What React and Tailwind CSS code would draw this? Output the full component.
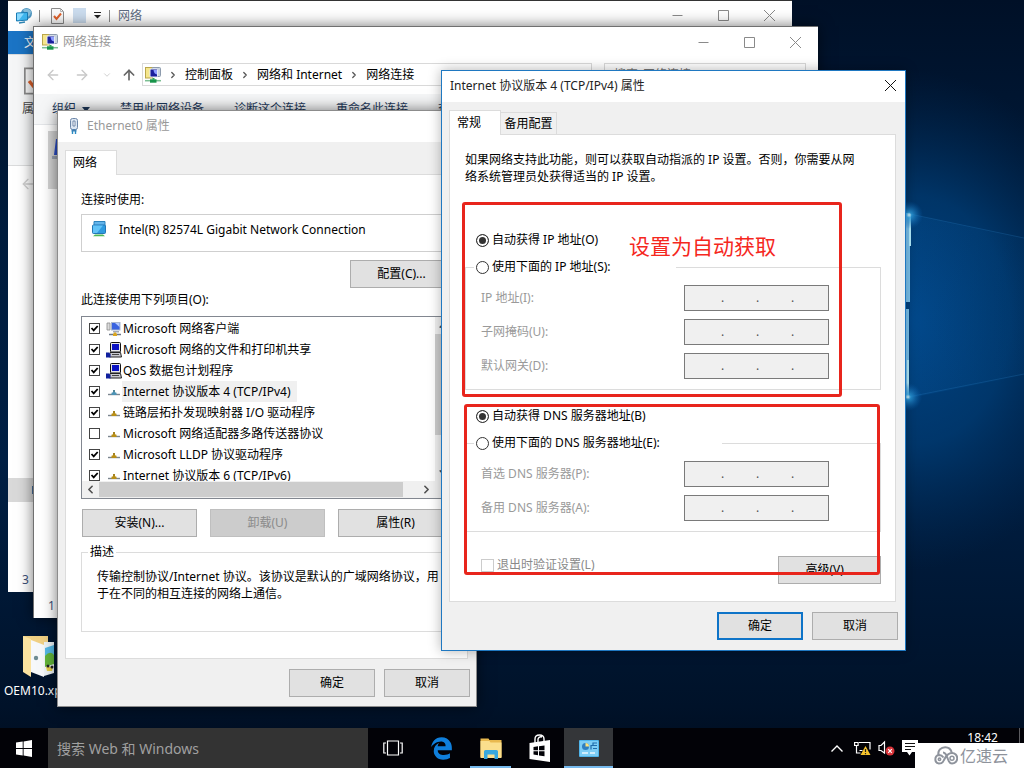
import { useState } from "react";
import { FaEdgeLegacy } from "react-icons/fa6";
import {
  ArrowLeft,
  ArrowRight,
  ArrowUp,
  ChevronDown,
  ChevronLeft,
  ChevronRight,
  ChevronUp,
} from "lucide-react";

const items = [
  { name: "Microsoft 网络客户端", icon: "client", on: true },
  { name: "Microsoft 网络的文件和打印机共享", icon: "service", on: true },
  { name: "QoS 数据包计划程序", icon: "service", on: true },
  { name: "Internet 协议版本 4 (TCP/IPv4)", icon: "active", on: true },
  { name: "链路层拓扑发现映射器 I/O 驱动程序", icon: "protocol", on: true },
  { name: "Microsoft 网络适配器多路传送器协议", icon: "protocol", on: false },
  { name: "Microsoft LLDP 协议驱动程序", icon: "protocol", on: true },
  { name: "Internet 协议版本 6 (TCP/IPv6)", icon: "protocol", on: true },
];

function Wallpaper() {
  return (
    <svg
      className="absolute inset-0 h-full w-full"
      viewBox="0 0 1024 768"
      preserveAspectRatio="none"
    >
      <defs>
        <linearGradient id="sky" x1="0" y1="0" x2="0" y2="1">
          <stop offset="0" stopColor="#001027" />
          <stop offset="0.3" stopColor="#001c3d" />
          <stop offset="0.6" stopColor="#001f44" />
          <stop offset="0.92" stopColor="#001229" />
          <stop offset="1" stopColor="#000c1e" />
        </linearGradient>
        <radialGradient id="glow">
          <stop offset="0" stopColor="#00509a" stopOpacity="0.75" />
          <stop offset="0.5" stopColor="#004380" stopOpacity="0.65" />
          <stop offset="1" stopColor="#00305f" stopOpacity="0" />
        </radialGradient>
        <radialGradient id="spark">
          <stop offset="0" stopColor="#d8f6ff" />
          <stop offset="0.2" stopColor="#2fa4e6" stopOpacity="0.8" />
          <stop offset="1" stopColor="#0a5fb0" stopOpacity="0" />
        </radialGradient>
        <linearGradient id="beam" x1="0" y1="0" x2="1" y2="0">
          <stop offset="0" stopColor="#0a62b0" stopOpacity="0.2" />
          <stop offset="1" stopColor="#0a62b0" stopOpacity="0.05" />
        </linearGradient>
      </defs>
      <rect width="1024" height="768" fill="url(#sky)" />
      <ellipse cx="910" cy="320" rx="200" ry="250" fill="url(#glow)" />
      <path d="M910 214 L1024 238 L1024 375 L910 398 Z" fill="url(#beam)" />
      <path d="M910 214 L1024 238" stroke="#2b7fc4" strokeOpacity="0.25" />
      <path d="M908 397 L1024 374" stroke="#2b7fc4" strokeOpacity="0.25" />
      <rect x="890" y="213" width="20" height="89" fill="#7cc4f0" />
      <rect x="890" y="309" width="19" height="89" fill="#7cc4f0" />
      <path d="M910 214 V246" stroke="#b5efff" strokeWidth="2" />
      <path d="M908 360 V398" stroke="#b5efff" strokeWidth="2" />
      <circle cx="909" cy="215" r="14" fill="url(#spark)" />
      <circle cx="908" cy="397" r="14" fill="url(#spark)" />
    </svg>
  );
}

function CaptionButtons() {
  return (
    <div className="flex text-[#8a8a8a]">
      {["M0.5 5.5 H10.5", "M0.5 0.5 H10.5 V10.5 H0.5 Z", "M0 0 L11 11 M11 0 L0 11"].map(
        (d, i) => (
          <button
            key={d}
            aria-label={["最小化", "最大化", "关闭"][i]}
            className="grid h-7 w-[46px] place-items-center"
          >
            <svg width="11" height="11" fill="none" stroke="currentColor">
              <path d={d} />
            </svg>
          </button>
        )
      )}
    </div>
  );
}

function ConnectionsIcon() {
  return (
    <svg width="16" height="16" viewBox="0 0 16 16" className="shrink-0">
      <rect x="0.5" y="0.5" width="7" height="10.5" fill="#f5e68c" stroke="#b9a64c" />
      <rect x="7" y="0.5" width="8.5" height="9" rx="1" fill="#c9d4e0" stroke="#8d9bad" />
      <rect x="5" y="2" width="7.5" height="8" rx="1" fill="#1a1f9c" stroke="#e4eaf4" />
      <path d="M8.5 3 h3.500 v4.500 q-3-.5-3.500-4.500z" fill="#8d9cff" />
      <path d="M7.5 11 h2 v1.500 h-2z" fill="#27ab55" />
      <path d="M0 13.700 h16" stroke="#7bbf92" strokeWidth="1.500" />
      <path d="M5 12.300 h6.500 v3.400 h-6.500z" fill="#18944a" />
    </svg>
  );
}

function CheckDocIcon({ className }) {
  return (
    <svg viewBox="0 0 13 16" className={className}>
      <path d="M0.5 0.5 H9.5 L12.5 3.5 V15.5 H0.5 Z" fill="#fafafa" stroke="#8b8b8b" />
      <path d="M9.5 0.5 V3.5 H12.5" fill="none" stroke="#b5b5b5" />
      <path d="M3 8 L5.5 11 L10 5.5" fill="none" stroke="#e0622c" strokeWidth="2" />
    </svg>
  );
}

function ItemIcon({ type }) {
  if (type === "client") {
    return (
      <svg width="16" height="16" viewBox="0 0 16 16">
        <path d="M1 2 h3 v7 h-3z" fill="#dcdcdc" stroke="#8b8b8b" strokeWidth="0.8" />
        <rect x="5.5" y="1.5" width="8.5" height="7.5" fill="#3a63e0" stroke="#a9b6cf" />
        <path d="M9 2 h4.5 v4z" fill="#b7cbff" />
        <path d="M7 10 h6 v1.5 h-6z" fill="#a3a9b5" />
        <path d="M3 13.5 h12" stroke="#6e7888" strokeWidth="1.5" />
        <path d="M7 15 v-2 l2-2 2 2 v2z" fill="#d9a520" />
      </svg>
    );
  }
  if (type === "service") {
    return (
      <svg width="16" height="16" viewBox="0 0 16 16">
        <rect x="4.5" y="0.5" width="10" height="9.5" rx="1" fill="#e6e6ea" stroke="#111" />
        <rect x="6" y="2" width="7" height="6" fill="#0a12c4" />
        <path d="M4 10.5 h10.5 l1 4.5 h-12z" fill="#c9c9cf" stroke="#222" />
        <path d="M6 12.5 h7" stroke="#444" />
        <path d="M0 10.5 h3 l1.5 2 v3 h-4.5z" fill="#10209e" />
      </svg>
    );
  }
  const color = type === "active" ? "#4d93b5" : "#b98f17";
  return (
    <svg width="16" height="16" viewBox="0 0 16 16">
      <path d="M2 10.5 h12" stroke="#7b858f" strokeWidth="1.4" />
      <path d="M5.5 11 V8.7 L7 8.2 V6 h2 V8.2 L10.5 8.7 V11z" fill={color} />
      <path d="M7.5 6 h1 v2 h-1z" fill="#6d6140" fillOpacity="0.5" />
    </svg>
  );
}

function WinButton({ children, className = "w-[86px]", primary, disabled }) {
  const look = primary
    ? "border-2 border-[#0e74c8] bg-[#e1e1e1]"
    : disabled
      ? "border border-[#bfbfbf] bg-[#cccccc] text-[#8b8b8b]"
      : "border border-[#adadad] bg-[#e1e1e1]";
  return (
    <button disabled={disabled} className={`h-7 shrink-0 ${look} ${className}`}>
      {children}
    </button>
  );
}

function Radio({ name, label, checked, onChange }) {
  return (
    <label className="flex h-[18px] items-center gap-[3px]">
      <input
        type="radio"
        name={name}
        checked={checked}
        onChange={onChange}
        className="h-[13px] w-[13px] appearance-none rounded-full border border-[#333] bg-white checked:bg-[#333] checked:shadow-[inset_0_0_0_2px_white]"
      />
      {label}
    </label>
  );
}

function IpField({ id, label }) {
  return (
    <div className="flex h-[26px] items-center justify-between pr-[51px] pl-[7px]">
      <label htmlFor={id} className="text-[#9a9a9a]">
        {label}
      </label>
      <div className="flex h-full w-[145px] items-center border border-[#7a7a7a] bg-[#f0f0f0] pl-1 text-[#555]">
        {[0, 1, 2, 3].map((n) => (
          <div key={n} className="flex items-center">
            {n > 0 && <span className="w-[3px]">.</span>}
            <input
              id={n === 0 ? id : undefined}
              aria-label={n === 0 ? undefined : `${label} ${n + 1}`}
              disabled
              className="w-8 text-center"
            />
          </div>
        ))}
      </div>
    </div>
  );
}

function ExplorerWindow() {
  return (
    <section className="absolute top-0 left-2 flex h-[592px] w-[784px] flex-col border-t border-[#333] bg-white text-[#5d6a80]">
      <header className="flex h-[30px] items-center pb-px">
        <svg width="16" height="16" viewBox="0 0 16 16" className="ml-2">
          <circle cx="10.500" cy="5.500" r="5.500" fill="#4a93bf" />
          <path d="M7 2 q4-3 8 1 q0 5-4 6z" fill="#86bcd8" />
          <path d="M0.500 5 L11.500 4.500 V12 L0.500 13z" fill="#3fb6ee" stroke="#1b7bb3" />
          <path d="M1 5.500 h7 l-5 6.500 h-2z" fill="#8adaff" />
          <path d="M3 15 l6-1" stroke="#2f86b5" strokeWidth="1.500" />
        </svg>
        <span className="mx-[7px] h-3 w-px bg-[#8a8a8a]" />
        <CheckDocIcon className="ml-1 h-4 w-[13px]" />
        <span className="ml-[9px] h-[15px] w-[13px] bg-[#cbdcee]" />
        <svg width="7" height="7" viewBox="0 0 7 7" className="ml-2">
          <path d="M0 0.5 h7" stroke="#222" />
          <path d="M0 3 h7 l-3.5 3.5z" fill="#222" />
        </svg>
        <span className="mx-2 h-3 w-px bg-[#8a8a8a]" />
        <span className="flex-1">网络</span>
        <CaptionButtons />
      </header>
      <nav className="flex h-[23px] items-center">
        <button className="h-full w-14 bg-[#1b74c5] text-white">文件</button>
      </nav>
      <div className="flex h-[112px] flex-col items-start border-y border-[#dadbdc] bg-[#f5f6f7] pt-3 pl-[14px] text-[#444]">
        <CheckDocIcon className="ml-[2px] h-7 w-[22px]" />
        <span className="mt-[5px]">属性</span>
      </div>
      <div className="flex flex-1 flex-col pt-[10px]">
        <ArrowLeft size={16} strokeWidth={2} className="ml-3 text-[#d0d0d0]" />
        <div className="mt-[286px] flex h-6 items-center bg-[#d9d9d9] pl-6">
          <span className="h-2 w-4 bg-[#4a6f9c]" />
        </div>
      </div>
      <footer className="flex h-6 items-center pl-[14px] text-[#3b4f78]">3</footer>
    </section>
  );
}

function ConnectionsWindow() {
  return (
    <section className="absolute top-[26px] left-[33px] flex h-[592px] w-[785px] flex-col border-t border-l border-[#707070] bg-white shadow-[0_0_14px_rgba(0,0,0,0.55)]">
      <header className="flex h-[30px] items-center gap-[5px] pl-2 text-[#999]">
        <ConnectionsIcon />
        <h2 className="flex-1">网络连接</h2>
        <CaptionButtons />
      </header>
      <div className="mt-[6px] flex h-[23px] items-center pr-3 text-[#c8c8c8]">
        <ArrowLeft size={16} strokeWidth={2} className="ml-[11px]" />
        <ArrowRight size={16} strokeWidth={2} className="ml-[13px]" />
        <ChevronDown size={10} strokeWidth={2} className="ml-[12px]" />
        <ArrowUp size={16} strokeWidth={2.5} className="ml-[9px] text-[#666]" />
        <div className="ml-[5px] flex h-full flex-1 items-center border border-[#d9d9d9] pl-[2px] text-black">
          <ConnectionsIcon />
          {["控制面板", "网络和 Internet", "网络连接"].map((crumb) => (
            <span key={crumb} className="flex items-center">
              <ChevronRight size={10} strokeWidth={3} className="mx-[7px] text-[#555]" />
              {crumb}
            </span>
          ))}
          <span className="flex-1" />
          <ChevronDown size={12} className="mr-6 text-[#777]" />
        </div>
        <input
          aria-label="搜索"
          placeholder='搜索"网络连接"'
          className="ml-3 h-full w-[202px] border border-[#d9d9d9] pl-[9px] placeholder:text-[#777]"
        />
      </div>
      <div className="mt-2 flex h-[31px] shrink-0 items-center border-b border-[#e3e5e8] bg-[#f5f6f7] pl-[18px] whitespace-nowrap text-[#1e395b]">
        <span className="flex w-[68px] items-center gap-[6px]">
          组织
          <svg width="8" height="5">
            <path d="M0 0 h8 l-4 5z" fill="#1e395b" />
          </svg>
        </span>
        <span className="w-[114px]">禁用此网络设备</span>
        <span className="w-[102px]">诊断这个连接</span>
        <span className="w-[102px]">重命名此连接</span>
        <span>查</span>
      </div>
      <div className="flex-1 pt-[6px] pl-[14px]">
        <div className="h-[58px] w-60 bg-[#d4d4d4] pt-2 pl-1">
          <svg width="22" height="22">
            <path d="M4 0 h18 v16 h-20z" fill="#2b4ec9" />
            <path d="M0 17 h22 v3 h-22z" fill="#9aa3b3" />
          </svg>
        </div>
      </div>
      <footer className="flex h-6 items-center pl-[14px] text-[#3b4f78]">1</footer>
    </section>
  );
}

function ScrollArrow({ icon: Icon, label }) {
  return (
    <button aria-label={label} className="grid h-[17px] w-[17px] place-items-center bg-[#f0f0f0]">
      <Icon size={13} strokeWidth={3} className="text-[#505050]" />
    </button>
  );
}

function EthernetDialog() {
  return (
    <section className="absolute top-[110px] left-[57px] w-[420px] border border-[#8c8c8c] bg-[#f0f0f0] shadow-[0_0_14px_rgba(0,0,0,0.55)]">
      <header className="flex h-[31px] items-center gap-2 bg-white pb-px pl-[11px] text-[#999]">
        <svg width="10" height="16" viewBox="0 0 10 16">
          <rect x="1.5" y="0.5" width="7" height="11" rx="2" fill="#dce6f2" stroke="#6d86a8" />
          <path d="M4 3 h2 v5 h-2z" fill="#fff" stroke="#5b7599" strokeWidth="0.8" />
          <path d="M2.5 11.5 h5 v2 h-5z" fill="#3f7fb4" />
          <path d="M3.5 13 v3 M6.5 13 v3" stroke="#2a8ac2" strokeWidth="1.4" />
        </svg>
        <h2>Ethernet0 属性</h2>
      </header>
      <div className="pt-2 pr-2 pl-[7px]">
        <div className="flex h-6">
          <button className="relative z-10 -mb-px w-[52px] border border-b-0 border-[#dcdcdc] bg-white pr-3">
            网络
          </button>
        </div>
        <div className="border border-[#dcdcdc] bg-white pt-4 pr-[14px] pb-[26px] pl-[15px]">
          <p className="h-[18px]">连接时使用:</p>
          <div className="mt-[5px] flex h-[38px] gap-3 border border-[#cfcfcf] pt-[6px] pl-[9px]">
            <svg width="16" height="16" viewBox="0 0 16 16">
              <path d="M3 0.5 h11 v4 h-11z" fill="#63b4ea" stroke="#2d83bd" />
              <rect x="1.5" y="4" width="13" height="8.500" rx="1" fill="#2e9be0" stroke="#2477b5" />
              <path d="M2 4.500 h10 l-6 7.5 h-4z" fill="#62c3f7" />
              <path d="M4 13.500 h8 l2 1.800 h-12z" fill="#4fb857" />
            </svg>
            <span>Intel(R) 82574L Gigabit Network Connection</span>
          </div>
          <div className="mt-2 flex justify-end">
            <WinButton className="w-[103px]">配置(C)...</WinButton>
          </div>
          <p className="mt-[3px] h-[18px]">此连接使用下列项目(O):</p>
          <div className="mt-[7px] flex h-[183px] flex-col border border-[#828790]">
            <div className="flex min-h-0 flex-1">
              <div className="flex-1 overflow-hidden pt-px">
                {items.map((item) => (
                  <label key={item.name} className="flex h-[21px] items-center pl-[7px]">
                    <span className="grid">
                      <input
                        type="checkbox"
                        defaultChecked={item.on}
                        className="peer h-[11px] w-[11px] appearance-none border border-[#444] bg-white [grid-area:1/1]"
                      />
                      <svg
                        viewBox="0 0 11 11"
                        className="pointer-events-none invisible h-[11px] w-[11px] [grid-area:1/1] peer-checked:visible"
                      >
                        <path d="M2.5 5 L4.7 7.4 L8.7 3" fill="none" stroke="#000" strokeWidth="1.8" />
                      </svg>
                    </span>
                    <span className="ml-[6px] shrink-0">
                      <ItemIcon type={item.icon} />
                    </span>
                    <span
                      className={
                        item.icon === "active"
                          ? "flex h-full items-center bg-[#f0f0f0] pr-[6px] pl-px whitespace-nowrap"
                          : "pl-px whitespace-nowrap"
                      }
                    >
                      {item.name}
                    </span>
                  </label>
                ))}
              </div>
              <div className="flex w-[17px] flex-col bg-[#f0f0f0]">
                <ScrollArrow icon={ChevronUp} label="向上滚动" />
                <div className="h-[101px] bg-[#cdcdcd]" />
                <div className="flex-1" />
                <ScrollArrow icon={ChevronDown} label="向下滚动" />
              </div>
            </div>
            <div className="flex h-[17px] bg-[#f0f0f0] pr-[17px]">
              <ScrollArrow icon={ChevronLeft} label="向左滚动" />
              <div className="my-px w-[304px] bg-[#cdcdcd]" />
              <div className="flex-1" />
              <ScrollArrow icon={ChevronRight} label="向右滚动" />
            </div>
          </div>
          <div className="mt-[10px] flex justify-between pl-px">
            <WinButton className="w-[115px]">安装(N)...</WinButton>
            <WinButton className="w-[115px]" disabled>
              卸载(U)
            </WinButton>
            <WinButton className="w-[115px]">属性(R)</WinButton>
          </div>
          <fieldset className="mt-[6px] border border-[#dcdcdc] pr-2 pb-[29px] pl-[6px]">
            <legend className="h-[18px] px-[2px]">描述</legend>
            <p className="pt-[7px] pl-[9px] leading-[17px]">
              传输控制协议/Internet 协议。该协议是默认的广域网络协议，用于在不同的相互连接的网络上通信。
            </p>
          </fieldset>
        </div>
      </div>
      <footer className="flex justify-end gap-[9px] pt-[10px] pr-[6px] pb-[9px]">
        <WinButton>确定</WinButton>
        <WinButton>取消</WinButton>
      </footer>
    </section>
  );
}

function Ipv4Dialog() {
  const [ipMode, setIpMode] = useState("auto");
  const [dnsMode, setDnsMode] = useState("auto");

  return (
    <section className="absolute top-[70px] left-[441px] w-[465px] border border-[#1f78c1] bg-[#f0f0f0] shadow-[0_0_12px_rgba(0,0,0,0.3)]">
      <header className="flex h-[31px] items-center justify-between bg-white pr-[9px] pb-[2px] pl-2 text-[#222]">
        <h2>Internet 协议版本 4 (TCP/IPv4) 属性</h2>
        <button aria-label="关闭">
          <svg width="11" height="11" stroke="#111">
            <path d="M0 0 L11 11 M11 0 L0 11" />
          </svg>
        </button>
      </header>

      <div className="pt-2 pr-[9px] pl-[7px]">
        <div className="flex h-6 items-end">
          <button className="relative z-10 -mb-px h-[25px] w-[52px] border border-b-0 border-[#dcdcdc] bg-white pr-3">
            常规
          </button>
          <button className="h-[22px] w-14 border border-b-0 border-l-0 border-[#dcdcdc]">
            备用配置
          </button>
        </div>
        <div className="border border-[#dcdcdc] bg-white pt-4 pr-[14px] pb-[17px] pl-[15px]">
          <p className="max-w-[400px] leading-[17px]">
            如果网络支持此功能，则可以获取自动指派的 IP 设置。否则，你需要从网络系统管理员处获得适当的 IP 设置。
          </p>

          {/* IP address */}
          <div className="mt-[46px] pl-[11px]">
            <Radio
              name="ip"
              label="自动获得 IP 地址(O)"
              checked={ipMode === "auto"}
              onChange={() => setIpMode("auto")}
            />
          </div>
          <fieldset className="mt-[9px] border border-[#dcdcdc] pb-[10px] pl-2">
            <legend className="w-[202px] pl-[2px]">
              <Radio
                name="ip"
                label="使用下面的 IP 地址(S):"
                checked={ipMode === "manual"}
                onChange={() => setIpMode("manual")}
              />
            </legend>
            <div className="flex flex-col gap-2 pt-[9px]">
              <IpField id="ip-address" label="IP 地址(I):" />
              <IpField id="subnet-mask" label="子网掩码(U):" />
              <IpField id="gateway" label="默认网关(D):" />
            </div>
          </fieldset>

          {/* DNS */}
          <div className="mt-[17px] pl-[11px]">
            <Radio
              name="dns"
              label="自动获得 DNS 服务器地址(B)"
              checked={dnsMode === "auto"}
              onChange={() => setDnsMode("auto")}
            />
          </div>
          <fieldset className="mt-[9px] border border-[#dcdcdc] pb-[10px] pl-2">
            <legend className="w-[248px] pl-[2px]">
              <Radio
                name="dns"
                label="使用下面的 DNS 服务器地址(E):"
                checked={dnsMode === "manual"}
                onChange={() => setDnsMode("manual")}
              />
            </legend>
            <div className="flex flex-col gap-2 pt-[9px]">
              <IpField id="dns-primary" label="首选 DNS 服务器(P):" />
              <IpField id="dns-backup" label="备用 DNS 服务器(A):" />
            </div>
          </fieldset>

          <div className="mt-6 flex items-start justify-between pl-4">
            <label className="flex h-[18px] items-center gap-[3px] text-[#8a8a8a]">
              <input
                type="checkbox"
                disabled
                className="h-[13px] w-[13px] appearance-none border border-[#cccccc] bg-white"
              />
              退出时验证设置(L)
            </label>
            <WinButton className="w-[103px]">高级(V)...</WinButton>
          </div>
        </div>
      </div>

      <footer className="flex justify-end gap-[9px] pt-[10px] pr-[7px] pb-[10px]">
        <WinButton primary>确定</WinButton>
        <WinButton>取消</WinButton>
      </footer>

      {/* Tutorial marks over the dialog */}
      <div className="pointer-events-none absolute top-[131px] left-5 z-20 h-[195px] w-[380px] rounded-[3px] border-3 border-[#e8251c]" />
      <div className="pointer-events-none absolute top-[333px] left-[22px] z-20 h-[171px] w-[416px] rounded-[3px] border-3 border-[#e8251c]" />
      <p className="pointer-events-none absolute top-[163px] left-[187px] z-20 text-[21px] leading-6 text-[#f5281e]">
        设置为自动获取
      </p>
    </section>
  );
}

function DesktopIcon() {
  return (
    <a href="#oem" className="absolute top-[634px] left-1 text-white">
      <svg width="34" height="46" viewBox="0 0 34 46" className="ml-[18px]">
        <path d="M1 2 h25 v36 h-17z" fill="#f0d084" />
        <path d="M1 2 l8 3 v38 l-8-5z" fill="#fbe3a0" />
        <path d="M9 6 l13 5 v32 l-13-5z" fill="#f6f8fa" />
        <path d="M22 8 h10 v31 l-10 3z" fill="#eef4f7" />
        <path d="M23 14 l9-3 v12 l-9 4z" fill="#55b9e6" />
        <path d="M23 22 q5-6 9-1 v9 l-9 3z" fill="#63b53a" />
        <path d="M24 33 h7 l-1 4 h-5z" fill="#e8d04c" />
        <circle cx="26" cy="32" r="1.500" fill="#222" />
        <circle cx="30" cy="33" r="1.500" fill="#222" />
        <circle cx="14" cy="24" r="2.2" fill="#6e8c93" />
      </svg>
      <span className="mt-[2px] block">OEM10.xp</span>
    </a>
  );
}

function Taskbar() {
  return (
    <footer className="absolute inset-x-0 bottom-0 flex h-10 bg-[#020207] text-white">
      <button aria-label="开始" className="grid w-12 place-items-center">
        <svg width="16" height="17" viewBox="0 0 16 17" fill="#fff">
          <path d="M0 2.5 L6.7 1.5 V8 H0z M7.6 1.4 L16 0 V8 H7.6z M0 9 H6.7 V15.5 L0 14.5z M7.6 9 H16 V17 L7.6 15.6z" />
        </svg>
      </button>
      <input
        aria-label="搜索"
        placeholder="搜索 Web 和 Windows"
        className="h-full w-80 bg-[#333333] px-[9px] text-[14px] placeholder:text-[#a0a0a0]"
      />
      <button aria-label="任务视图" className="grid w-[49px] place-items-center">
        <svg width="20" height="16" viewBox="0 0 20 16" fill="none" stroke="#fff" strokeWidth="1.2">
          <path d="M4.5 1 H15.5 V15 H4.5z M3 3 H0.8 V13 H3 M17 3 H19.2 V13 H17" />
        </svg>
      </button>
      <button aria-label="Edge" className="grid w-[49px] place-items-center">
        <FaEdgeLegacy size={23} className="text-[#0f7fdc]" />
      </button>
      <button aria-label="文件资源管理器" className="relative grid w-[49px] place-items-center">
        <svg width="22" height="21" viewBox="0 0 22 21">
          <path d="M0.5 0.500 h8 l1 1.500 h12 v17 h-21z" fill="#e9b94f" />
          <path d="M0.5 3 h9 l1 1.500 h11 v15.500 h-21z" fill="#fbdf8d" />
          <path d="M4 21 V13.500 q0-1.500 1.500-1.500 h11 q1.5 0 1.5 1.5 V21 h-3.5 v-4.500 h-7 v4.500z" fill="#37a8de" />
        </svg>
        <span className="absolute inset-x-1 bottom-0 h-[2px] bg-[#76b9ed]" />
      </button>
      <button aria-label="应用商店" className="grid w-[49px] place-items-center">
        <svg width="22" height="28" viewBox="0 0 22 28">
          <path d="M6 9 V5 q0-4 4.500-4 q4.500 0 4.500 4 V8 M9 8 V5 q1-3 4-2" fill="none" stroke="#fff" strokeWidth="1.4" />
          <path d="M0.5 9 L21 6 V28 L0.5 25z" fill="#fff" />
          <path d="M4.5 13 l4.5-.7 v4 h-4.5z M10 12.2 l5.5-.8 v4.9 h-5.5z M4.5 17.3 h4.500 v4 l-4.500-.7z M10 17.3 h5.500 v5 l-5.500-.8z" fill="#020207" />
        </svg>
      </button>
      <button aria-label="控制面板" className="relative grid w-[49px] place-items-center bg-[#343639]">
        <svg width="20" height="17" viewBox="0 0 20 17">
          <rect width="20" height="17" rx="1" fill="#4fb4ea" />
          <rect x="1" y="1" width="18" height="15" fill="#7dcdf5" />
          <circle cx="6.500" cy="6.500" r="3.500" fill="#2f7fc0" />
          <path d="M6.500 6.500 V3 A3.500 3.500 0 0 1 10 6.500z" fill="#ffe27a" />
          <path d="M12 9.500 v-4 h2 v-2.500 h4 M14 5.500 h4 M14 8.500 h4" fill="none" stroke="#1f6cab" strokeWidth="1.200" />
          <path d="M3 13 h6 M11 13 h5" stroke="#e9f8ff" strokeWidth="1.500" />
        </svg>
        <span className="absolute inset-x-0 bottom-0 h-[2px] bg-[#76b9ed]" />
      </button>

      {/* Tray */}
      <div className="ml-auto flex items-center">
        <svg width="12" height="7" fill="none" stroke="#fff" strokeWidth="1.4">
          <path d="M0.500 6.500 L6 1 L11.500 6.500" />
        </svg>
        <svg width="17" height="16" viewBox="0 0 17 16" className="ml-[11px]">
          <path d="M5 2.500 h11 v7 M0.600 2.500 h3.500 v3 h-3.500z M2.500 5.500 v7.500 h4 M5.500 10.500 h3" fill="none" stroke="#fff" strokeWidth="1.200" />
          <path d="M11.500 6 L16.500 15 H6.500z" fill="#f6c32c" />
          <path d="M11.500 9 v3 M11.500 13 v1.200" stroke="#222" strokeWidth="1.200" />
        </svg>
        <svg width="17" height="16" viewBox="0 0 17 16" className="ml-[7px]">
          <path d="M1 5.500 h2 L6.500 2 v11 L3 10.500 H1z" fill="none" stroke="#fff" strokeWidth="1.200" />
          <circle cx="12" cy="11" r="4.500" fill="#d8343a" />
          <path d="M10.200 9.200 l3.600 3.600 M13.800 9.200 l-3.600 3.600" stroke="#fff" strokeWidth="1.200" />
        </svg>
        <svg width="16" height="16" viewBox="0 0 16 16" className="ml-[7px]">
          <path d="M0 0 h16 v12 h-6 l-2.500 3.500 -2.500-3.500 h-5z" fill="#fff" />
          <path d="M3 3.500 h10 M3 6.500 h10 M3 9.500 h6" stroke="#111" />
        </svg>
        <time className="ml-[49px] self-start pt-1 leading-3">18:42</time>
        <span className="mr-1 ml-[21px] h-full w-px bg-[#5c5c60]" />
      </div>
    </footer>
  );
}

function Watermark() {
  return (
    <div className="absolute right-0 bottom-0 flex h-[25px] w-[109px] items-center gap-[2px] bg-white pl-[18px] text-base leading-4 text-[#8e939c]">
      <svg width="25" height="19" viewBox="0 0 25 19" fill="none" stroke="#8e939c" strokeWidth="2">
        <path d="M5.500 9 C4.500 4.500 8 1.200 12.200 1.200 C15.500 1.200 18 3.200 18.800 6.800" />
        <path d="M10 6.500 C12.500 6.500 13.500 9 14.500 12 C15.500 15.500 16.500 17.500 19 17.500 A5.200 5.200 0 0 0 19 7 C14 7 12.500 11 11 14 C10 16.500 8.500 17.500 6 17.500 A4.300 4.300 0 0 1 6 9 C8 9 9.500 10 10.500 11.500" />
        <circle cx="19" cy="12.300" r="2" strokeWidth="1.500" />
        <circle cx="6.500" cy="13.200" r="1.200" strokeWidth="1.500" />
      </svg>
      <span>亿速云</span>
    </div>
  );
}

function App() {
  return (
    <main className="relative h-screen w-full overflow-hidden bg-[#001027] font-['Noto_Sans','Noto_Sans_CJK_SC',sans-serif] text-[12px] leading-[18px] text-black">
      <Wallpaper />
      <DesktopIcon />
      <ExplorerWindow />
      <ConnectionsWindow />
      <EthernetDialog />
      <Ipv4Dialog />
      <Taskbar />
      <Watermark />
    </main>
  );
}

export default App;
